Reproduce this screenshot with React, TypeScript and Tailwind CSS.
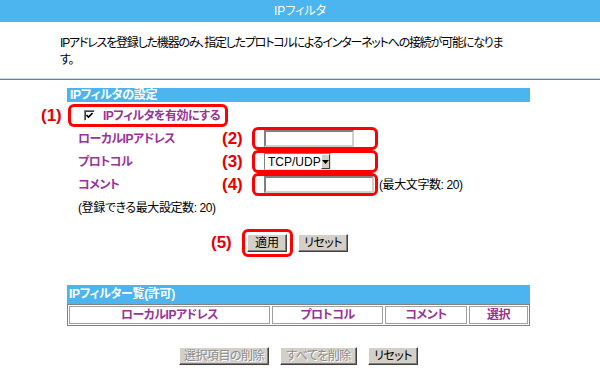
import React from "react";

const btn =
  "h-[18px] bg-[#d4d0c8] border border-t-white border-l-white border-r-[#404040] border-b-[#404040] shadow-[inset_-1px_-1px_0_#808080] text-[12px] leading-[14px] text-black flex items-center justify-center whitespace-nowrap";
const btnDisabled =
  "h-[18px] bg-[#d4d0c8] border border-t-white border-l-white border-r-[#404040] border-b-[#404040] shadow-[inset_-1px_-1px_0_#808080] text-[12px] leading-[14px] text-[#8c8c8c] [text-shadow:1px_1px_0_#ffffff] flex items-center justify-center whitespace-nowrap";
const redBox = "border-[3px] border-[#ff0000] rounded-[6px] flex items-center shrink-0";
const num = "text-[#e60000] font-bold text-[17px] leading-[20px] shrink-0";
const label = "text-[#993399] font-bold text-[12px] tracking-[-0.5px] whitespace-nowrap";
const sunken =
  "bg-white border-2 border-t-[#808080] border-l-[#808080] border-r-[#d4d0c8] border-b-[#d4d0c8]";

export default function App() {
  return (
    <div className="w-[600px] h-[377px] bg-white overflow-hidden font-['Liberation_Sans','Noto_Sans_CJK_JP',sans-serif] [font-feature-settings:'palt'] text-[12px] text-black">
      <div className="h-[22px] bg-[#4cb4ee] flex items-center justify-center text-white text-[12px]">
        IPフィルタ
      </div>
      <div className="pt-[13px] pl-[60px] leading-[17px] text-[12px] tracking-[-1.2px] whitespace-nowrap">
        IPアドレスを登録した機器のみ、指定したプロトコルによるインターネットへの接続が可能になりま
        <br />
        す。
      </div>
      <div className="mt-[9px] h-px bg-[#c4d6e2]" />
      <div className="h-px bg-[#5f87a3]" />

      <div className="mt-[8px] ml-[67px] w-[463px] h-[14px] bg-[#4cb4ee] text-white font-bold text-[12px] leading-[14px] pl-[3px] tracking-[-0.3px]">
        IPフィルタの設定
      </div>

      {/* Row 1 */}
      <div className="mt-[2px] flex items-center h-[23px]">
        <div className="w-[41px] shrink-0" />
        <div className={`${num} w-[27px]`}>(1)</div>
        <div className={`${redBox} w-[160px] h-[23px] pl-[13px]`}>
          <div className="w-[11px] h-[11px] shrink-0 bg-white border border-t-[#808080] border-l-[#808080] border-r-white border-b-white shadow-[inset_1px_1px_0_#404040] flex items-center justify-center">
            <svg width="7" height="7" viewBox="0 0 7 7">
              <path d="M0.5 3 L2.5 5 L6.5 1" stroke="#000" strokeWidth="1.6" fill="none" />
            </svg>
          </div>
          <span className={`${label} ml-[8px]`}>IPフィルタを有効にする</span>
        </div>
      </div>

      {/* Row 2 */}
      <div className="flex items-center h-[23px]">
        <div className={`${label} pl-[78px] w-[222px] shrink-0`}>ローカルIPアドレス</div>
        <div className={`${num} w-[30px]`}>(2)</div>
        <div className={`${redBox} w-[126px] h-[23px] pl-[9px]`}>
          <div className={`${sunken} w-[90px] h-[17px]`} />
        </div>
      </div>

      {/* Row 3 */}
      <div className="flex items-center h-[23px]">
        <div className={`${label} pl-[78px] w-[222px] shrink-0`}>プロトコル</div>
        <div className={`${num} w-[30px]`}>(3)</div>
        <div className={`${redBox} w-[126px] h-[23px] pl-[9px]`}>
          <div className="w-[67px] h-[17px] bg-white border border-t-[#808080] border-l-[#808080] border-r-[#e0e0e0] border-b-[#e0e0e0] flex items-center">
            <span className="pl-[3px] text-[12px] leading-[14px] flex-1 font-['Liberation_Sans',sans-serif]">TCP/UDP</span>
            <div className="w-[15px] h-[15px] bg-[#d4d0c8] border border-t-white border-l-white border-r-[#404040] border-b-[#404040] flex items-center justify-center">
              <svg width="7" height="4" viewBox="0 0 7 4">
                <path d="M0 0 H7 L3.5 4 Z" fill="#000" />
              </svg>
            </div>
          </div>
        </div>
      </div>

      {/* Row 4 */}
      <div className="flex items-center h-[23px]">
        <div className={`${label} pl-[78px] w-[222px] shrink-0`}>コメント</div>
        <div className={`${num} w-[30px]`}>(4)</div>
        <div className={`${redBox} w-[126px] h-[23px] pl-[9px]`}>
          <div className={`${sunken} w-[110px] h-[17px]`} />
        </div>
        <span className="ml-[1px] whitespace-nowrap tracking-[-0.4px]">(最大文字数: 20)</span>
      </div>

      {/* Row 5 */}
      <div className="flex items-center h-[23px] pl-[78px] tracking-[-0.4px]">(登録できる最大設定数: 20)</div>

      {/* Apply row */}
      <div className="mt-[10px] flex items-center h-[28px]">
        <div className="w-[211px] shrink-0" />
        <div className={`${num} w-[31px]`}>(5)</div>
        <div className={`${redBox} w-[51px] h-[28px] pl-[2px]`}>
          <div className={`${btn} w-[40px]`}>適用</div>
        </div>
        <div className={`${btn} w-[50px] ml-[5px] tracking-[-0.5px]`}>リセット</div>
      </div>

      {/* List */}
      <div className="mt-[28px] ml-[67px] w-[463px] h-[19px] bg-[#4cb4ee] text-white font-bold text-[12px] leading-[19px] pl-[2px] tracking-[-0.3px]">
        IPフィルター覧(許可)
      </div>
      <div className="ml-[67px] w-[463px] h-[22px] border border-[#808080] flex p-px gap-[2px] bg-white">
        <div className={`${label} w-[201px] border border-[#a0a0a0] flex items-center justify-center`}>ローカルIPアドレス</div>
        <div className={`${label} w-[111px] border border-[#a0a0a0] flex items-center justify-center`}>プロトコル</div>
        <div className={`${label} w-[82px] border border-[#a0a0a0] flex items-center justify-center`}>コメント</div>
        <div className={`${label} flex-1 border border-[#a0a0a0] flex items-center justify-center`}>選択</div>
      </div>

      <div className="mt-[21px] flex items-center pl-[179px] gap-[11px]">
        <div className={`${btnDisabled} w-[90px] tracking-[-0.5px]`}>選択項目の削除</div>
        <div className={`${btnDisabled} w-[77px] tracking-[-0.5px]`}>すべてを削除</div>
        <div className={`${btn} w-[50px] tracking-[-0.5px]`}>リセット</div>
      </div>
    </div>
  );
}
